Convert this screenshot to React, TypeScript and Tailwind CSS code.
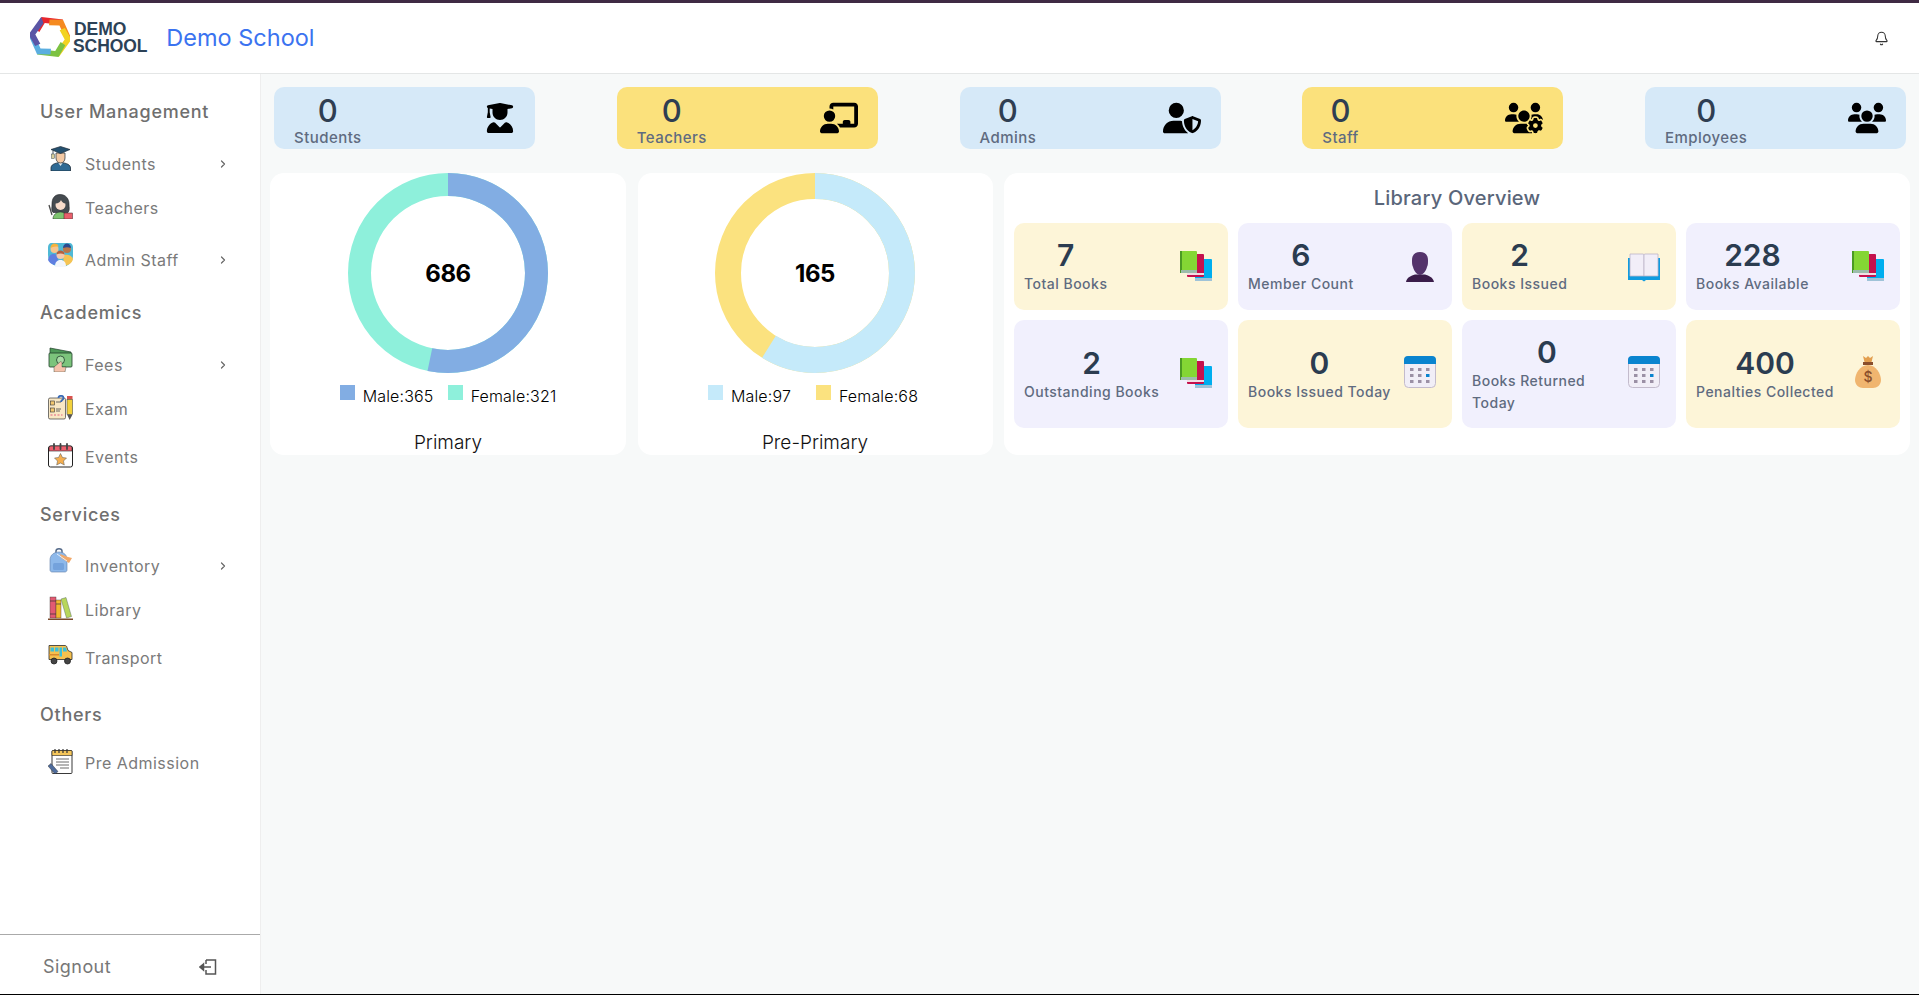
import { Bell, ChevronRight } from 'lucide-react'
import { FaChalkboardUser, FaUserGraduate, FaUserShield, FaUsers, FaUsersGear } from 'react-icons/fa6'
import type { ReactNode } from 'react'

// ---- small colour illustrations ----
const Pic = ({ children, className = 'mb-1' }: { children: ReactNode; className?: string }) => (
  <svg viewBox="0 0 25 25" className={`w-[25px] h-[25px] shrink-0 ${className}`}>{children}</svg>
)

const StudentPic = () => (
  <>
    <path d="M3 25v-3c0-3 3-5 9.500-5.500C19 17 22.500 19 22.500 22v3z" fill="#2f6a94" stroke="#1c2b38" strokeWidth="0.8" />
    <path d="M10 16.500l2.500 3.500 2.500-3.500z" fill="#e8eef2" />
    <path d="M8 7h9v5c0 3-2 5-4.500 5S8 15 8 12z" fill="#f3c9a4" stroke="#1c2b38" strokeWidth="0.7" />
    <path d="M3 3.500L12.500 .5l9.500 3-9.500 4z" fill="#24506f" stroke="#1c2b38" strokeWidth="0.7" />
    <path d="M5 4.500v5" stroke="#1c2b38" strokeWidth="0.8" />
    <rect x="3.500" y="8" width="3" height="4.500" fill="#d9cf9c" stroke="#1c2b38" strokeWidth="0.4" />
  </>
)
const TeacherPic = () => (
  <>
    <path d="M12 .5C6 .5 4 5 4 10c0 4-1 6 1 8.500h15c2-3 1-4.500 1-8.500 0-5-3-9.500-9-9.500z" fill="#454b50" stroke="#1c2024" strokeWidth="0.6" />
    <circle cx="12.500" cy="11" r="5" fill="#f8dccb" />
    <path d="M7.500 9.500c3 0 4.500-1.500 5.500-3.500 1 2 2.500 3.500 4.500 3.500-.5-3.500-2.500-5.500-5-5.500s-4.500 2-5 5.500z" fill="#454b50" />
    <path d="M5 25c0-4 3-7 7.500-7s6.500 3 6.500 7z" fill="#7ec46f" stroke="#1c2024" strokeWidth="0.5" />
    <rect x="16" y="19" width="8.500" height="6" fill="#e85f6b" stroke="#3d2024" strokeWidth="0.5" />
    <path d="M1 11l3 10" stroke="#4a4a4a" strokeWidth="1.300" />
  </>
)
const AdminPic = () => (
  <>
    <path d="M4 1h17c3 0 4 2 4 5v8c0 6-5 11-12 11S0 20 0 13V6c0-3 1-5 4-5z" fill="#4fb9d6" />
    <circle cx="6.500" cy="7" r="4" fill="#f7c58e" />
    <path d="M2.500 6c0-3 2-4.500 4-4.500s4 1 4 3c-3 0-6 0-8 1.500z" fill="#f6b23c" />
    <circle cx="19" cy="7" r="4" fill="#b9774b" />
    <path d="M15 6c0-3 2-4.500 4-4.500s4 1.500 4 4.500c-3-1-5-1-8 0z" fill="#2b4a8f" />
    <path d="M0 18c1-5 3-6 6-6s4 3 4 8l-4 3c-3-1-5-3-6-5z" fill="#5f7fe0" />
    <path d="M15 13c4-1 9 0 10 4-1 4-4 6-9 7z" fill="#f6c453" />
    <circle cx="12.500" cy="13" r="4" fill="#f6c9ad" />
    <path d="M8.500 12.500c0-3 2-4 4-4s4 1 4 4c-3-1.500-5-1.500-8 0z" fill="#b65f3c" />
    <path d="M7 25c0-5 2-7 5.500-7s5.500 2 5.500 7z" fill="#f3f6fb" />
  </>
)
const FeesPic = () => (
  <>
    <path d="M2 1l21 4v6H2z" fill="#4e9a58" stroke="#1f3d2a" strokeWidth="0.7" />
    <rect x="1" y="6" width="23" height="14" rx="1" fill="#7cc47c" stroke="#1f3d2a" strokeWidth="0.8" />
    <circle cx="12.500" cy="13" r="4" fill="#a9dca6" stroke="#1f3d2a" strokeWidth="0.8" />
    <path d="M6 25v-5l6-5c1-1 2 0 2 1v4h4l-1 5z" fill="#f6c3ac" stroke="#1f3d2a" strokeWidth="0.4" />
  </>
)
const ExamPic = () => (
  <>
    <rect x="0.500" y="3" width="17" height="21" rx="1.500" fill="#f8e7c4" stroke="#3a3a3a" strokeWidth="0.7" />
    <rect x="2.500" y="6" width="4" height="4" fill="#f2c76f" stroke="#333" strokeWidth="0.6" />
    <rect x="2.500" y="13" width="4" height="4" fill="#f2c76f" stroke="#333" strokeWidth="0.6" />
    <path d="M8 7h5M8 14h5M8 16h4" stroke="#555" strokeWidth="0.9" />
    <path d="M2.500 20h12" stroke="#e98f96" strokeWidth="1.500" strokeDasharray="2 1.500" />
    <path d="M10.500 3c0-3 5-3 5 0 0 2-2.500 2-2.500 4" fill="none" stroke="#3b6bb5" strokeWidth="1.800" />
    <rect x="19" y="1" width="5.500" height="3.500" fill="#d9534f" />
    <rect x="19" y="4.500" width="5.500" height="15" fill="#f2d13c" stroke="#333" strokeWidth="0.5" />
    <path d="M19 19.500h5.500L21.700 25z" fill="#555" />
  </>
)
const EventsPic = () => (
  <>
    <rect x="0.500" y="3" width="24" height="21" rx="2" fill="#fff" stroke="#222" strokeWidth="1" />
    <path d="M1 8V5a2 2 0 012-2h19a2 2 0 012 2v3z" fill="#ee5f6e" stroke="#222" strokeWidth="0.6" />
    <path d="M6 1v5M12.500 1v5M19 1v5" stroke="#444" strokeWidth="1.800" strokeLinecap="round" />
    <path d="M12.500 10.500l2 4 4 .5-3 3 .8 4-3.800-2-3.800 2 .8-4-3-3 4-.5z" fill="#f4ae4f" stroke="#555" strokeWidth="0.5" />
  </>
)
const InventoryPic = () => (
  <>
    <path d="M8 5V3c0-3 6-3 6 0v2" fill="none" stroke="#566b8a" strokeWidth="1.500" />
    <path d="M2 12c0-5 4-8 9-8s8 3 8 8v10c0 1-1 2-2 2H4c-1 0-2-1-2-2z" fill="#8db8ea" stroke="#5f7ea8" strokeWidth="0.6" />
    <rect x="5" y="15" width="11" height="7" rx="1.500" fill="#74a2dc" />
    <path d="M12 6l8 3 4 1-3 5-8-5z" fill="#f2a96a" />
    <path d="M9 6l10 7" stroke="#e6eef7" strokeWidth="1" />
  </>
)
const LibraryPic = () => (
  <>
    <rect x="2" y="1" width="6" height="21" fill="#e25a72" stroke="#433" strokeWidth="0.4" />
    <rect x="8" y="4" width="5" height="18" fill="#f1b72f" stroke="#433" strokeWidth="0.4" />
    <path d="M13 3l5-1.500 5.500 19-5 1.500z" fill="#b7d65b" stroke="#455" strokeWidth="0.4" />
    <path d="M2 5h6M2 18h6M8 8h5" stroke="#333" strokeWidth="0.7" />
    <rect x="0" y="22.500" width="25" height="1.500" fill="#7a4a2c" />
  </>
)
const TransportPic = () => (
  <>
    <path d="M1 1.500h16c1 0 2 1 2 2l1 3 4 2v7H1z" fill="#f6c14e" stroke="#2c2c2c" strokeWidth="0.8" />
    <rect x="2.500" y="3.500" width="3.500" height="4" fill="#3cc0d8" />
    <rect x="7" y="3.500" width="3.500" height="4" fill="#3cc0d8" />
    <rect x="11.500" y="3.500" width="2.500" height="9" fill="#3cc0d8" />
    <path d="M15 3.500h3l1 4h-4z" fill="#3cc0d8" />
    <rect x="1" y="10" width="10" height="1.500" fill="#d98a2e" />
    <circle cx="6" cy="17" r="3" fill="#444" stroke="#222" strokeWidth="0.8" />
    <circle cx="19.500" cy="17" r="3" fill="#444" stroke="#222" strokeWidth="0.8" />
  </>
)
const PreAdmissionPic = () => (
  <>
    <rect x="4" y="1.500" width="20" height="23" rx="1" fill="#fff" stroke="#222" strokeWidth="0.9" />
    <path d="M4 6.500V2.500a1 1 0 011-1h18a1 1 0 011 1v4z" fill="#f5c65a" stroke="#222" strokeWidth="0.6" />
    <path d="M7 0v4M11 0v4M15 0v4M19 0v4" stroke="#333" strokeWidth="1.200" />
    <path d="M8 10h13M8 13h13M8 16h13M12 19h9" stroke="#6b6b6b" strokeWidth="1" />
    <path d="M0 17l3-2.500 7 8-3 2.500z" fill="#4f6c9c" stroke="#222" strokeWidth="0.4" />
  </>
)

const Books = () => (
  <svg viewBox="0 0 32 32" className="w-8 h-8 shrink-0">
    <rect x="15" y="8" width="17" height="22" rx="1" fill="#00aeef" />
    <rect x="15" y="27" width="17" height="3" fill="#9fc3d8" />
    <rect x="7" y="3" width="17" height="23" rx="1" fill="#c5114d" />
    <rect x="7" y="22" width="17" height="2" fill="#f1dfe5" />
    <rect x="0" y="0" width="17" height="22" rx="1" fill="#84d634" />
    <rect x="0" y="0" width="2" height="22" fill="#4b9a23" />
    <rect x="1" y="19" width="16" height="3" fill="#9cbcab" />
  </svg>
)
const Member = () => (
  <svg viewBox="0 0 32 32" className="w-8 h-8 shrink-0">
    <path d="M2 31c1-5 5-6 9-7.500h10c4 1.500 8 2.500 9 7.500z" fill="#3b1d4a" />
    <path d="M8 9c0-5 3-8 8-8s8 3 8 8c0 3 0 5-1 7-1 4-4 8-7 8s-6-4-7-8c-1-2-1-4-1-7z" fill="#54336b" />
  </svg>
)
const OpenBook = () => (
  <svg viewBox="0 0 32 32" className="w-8 h-8 shrink-0 mt-1">
    <path d="M0 5h32v22H18l-2 1.500-2-1.500H0z" fill="#0f9be0" />
    <path d="M2 1h13c.7 0 1 .5 1 1v21H2z" fill="#f2eef8" stroke="#bdb4c8" strokeWidth="0.8" />
    <path d="M30 1H17c-.7 0-1 .5-1 1v21h14z" fill="#f2eef8" stroke="#bdb4c8" strokeWidth="0.8" />
  </svg>
)
const Calendar = () => (
  <svg viewBox="0 0 32 32" className="w-8 h-8 shrink-0 mb-1">
    <rect x="0.500" y="0.500" width="31" height="31" rx="4" fill="#f1eef7" stroke="#c3bbcc" />
    <path d="M0 8V4a4 4 0 014-4h24a4 4 0 014 4v4z" fill="#0a84cf" />
    <g fill="#9b90a5">
      <rect x="6" y="12" width="3.500" height="3" />
      <rect x="14" y="12" width="3.500" height="3" />
      <rect x="22" y="12" width="3.500" height="3" />
      <rect x="6" y="18" width="3.500" height="3" />
      <rect x="14" y="18" width="3.500" height="3" />
      <rect x="6" y="24" width="3.500" height="3" />
      <rect x="14" y="24" width="3.500" height="3" />
      <rect x="22" y="24" width="3.500" height="3" />
    </g>
    <rect x="22" y="18" width="3.500" height="3" fill="#0a84cf" />
  </svg>
)
const MoneyBag = () => (
  <svg viewBox="0 0 32 32" className="w-8 h-8 shrink-0 mb-1">
    <path d="M16 9C8 9 3 18 3 24c0 5 4 8 8 8h10c4 0 8-3 8-8 0-6-5-15-13-15z" fill="#f0b56f" />
    <path d="M11 0l3 2 2-2 2 2 3-2-1.500 6h-7z" fill="#e39f4f" />
    <rect x="11" y="6" width="10" height="3" fill="#8a4f2c" />
    <text x="16" y="26" textAnchor="middle" fontSize="14" fontFamily="Inter, sans-serif" fontWeight="500" fill="#8a4f2c">$</text>
  </svg>
)

// ---- data ----
const SIDEBAR = [
  { title: 'User Management', headClass: '', items: [
    { name: 'Students', pic: <StudentPic />, more: true, rowClass: 'mt-4' },
    { name: 'Teachers', pic: <TeacherPic />, more: false, rowClass: '' },
    { name: 'Admin Staff', pic: <AdminPic />, more: true, rowClass: 'mt-2' },
  ] },
  { title: 'Academics', headClass: 'mt-[17px]', items: [
    { name: 'Fees', pic: <FeesPic />, more: true, rowClass: 'mt-4' },
    { name: 'Exam', pic: <ExamPic />, more: false, rowClass: '' },
    { name: 'Events', pic: <EventsPic />, more: false, rowClass: 'mt-1' },
  ] },
  { title: 'Services', headClass: 'mt-[22px]', items: [
    { name: 'Inventory', pic: <InventoryPic />, more: true, rowClass: 'mt-[15px]' },
    { name: 'Library', pic: <LibraryPic />, more: false, rowClass: '' },
    { name: 'Transport', pic: <TransportPic />, more: false, rowClass: 'mt-1' },
  ] },
  { title: 'Others', headClass: 'mt-[21px]', items: [
    { name: 'Pre Admission', pic: <PreAdmissionPic />, more: false, rowClass: 'mt-3' },
  ] },
]

const STATS = [
  { label: 'Students', bg: 'bg-[#d6e9f8]', icon: <FaUserGraduate size={30} /> },
  { label: 'Teachers', bg: 'bg-[#fbe17c]', icon: <FaChalkboardUser size={38} /> },
  { label: 'Admins', bg: 'bg-[#d6e9f8]', icon: <FaUserShield size={38} /> },
  { label: 'Staff', bg: 'bg-[#fbe17c]', icon: <FaUsersGear size={38} /> },
  { label: 'Employees', bg: 'bg-[#d6e9f8]', icon: <FaUsers size={38} /> },
]

const LIBRARY = [
  { value: '7', label: 'Total Books', bg: 'bg-[#fdf5d8]', icon: <Books />, boxClass: 'mb-[2px]' },
  { value: '6', label: 'Member Count', bg: 'bg-[#f1f0fd]', icon: <Member />, boxClass: 'mb-[2px]' },
  { value: '2', label: 'Books Issued', bg: 'bg-[#fdf5d8]', icon: <OpenBook />, boxClass: 'mb-[2px]' },
  { value: '228', label: 'Books Available', bg: 'bg-[#f1f0fd]', icon: <Books />, boxClass: 'mb-[2px]' },
  { value: '2', label: 'Outstanding Books', bg: 'bg-[#f1f0fd]', icon: <Books />, boxClass: '' },
  { value: '0', label: 'Books Issued Today', bg: 'bg-[#fdf5d8]', icon: <Calendar />, boxClass: '' },
  { value: '0', label: 'Books Returned Today', bg: 'bg-[#f1f0fd]', icon: <Calendar />, boxClass: 'w-[150px]' },
  { value: '400', label: 'Penalties Collected', bg: 'bg-[#fdf5d8]', icon: <MoneyBag />, boxClass: '' },
]

const LOGO_BANDS = ['#e8262d', '#f58a20', '#f2d321', '#7cc242', '#5aaee0', '#5a55a5']

function Donut({ male, female, maleColor, femaleColor, thickness }: { male: number; female: number; maleColor: string; femaleColor: string; thickness: number }) {
  const total = male + female
  const r = 100 - thickness / 2
  const c = 2 * Math.PI * r
  return (
    <div className="relative w-[200px] h-[200px]">
      <svg viewBox="0 0 200 200" className="w-[200px] h-[200px] -rotate-90">
        <circle cx="100" cy="100" r={r} fill="none" stroke={femaleColor} strokeWidth={thickness} />
        <circle cx="100" cy="100" r={r} fill="none" stroke={maleColor} strokeWidth={thickness} strokeDasharray={`${(c * male) / total} ${c}`} />
      </svg>
      <div className="absolute inset-0 pt-[2px] flex items-center justify-center text-[24px] font-bold text-black tracking-[-0.02em]">{total}</div>
    </div>
  )
}

function ChartCard({ title, male, female, maleColor, femaleColor, maleSwatch, femaleSwatch, thickness, legendClass = '' }: { title: string; male: number; female: number; maleColor: string; femaleColor: string; maleSwatch: string; femaleSwatch: string; thickness: number; legendClass?: string }) {
  return (
    <div className="bg-white rounded-[14px] flex flex-col items-center">
      <Donut male={male} female={female} maleColor={maleColor} femaleColor={femaleColor} thickness={thickness} />
      <div className={`flex mt-3 text-[16px] leading-[21px] text-black font-light tracking-[0.01em] ${legendClass}`}>
        <div className="flex items-start w-[108px]">
          <span className={`w-[15px] h-[15px] mr-2 ${maleSwatch}`} />
          <span className="mt-px">Male:{male}</span>
        </div>
        <div className="flex items-start">
          <span className={`w-[15px] h-[15px] mr-2 ${femaleSwatch}`} />
          <span className="mt-px">Female:{female}</span>
        </div>
      </div>
      <div className="mt-6 text-[19px] leading-6 text-[#111] font-light">{title}</div>
    </div>
  )
}

export default function App() {
  return (
    <div className="w-[1919px] h-[995px] flex flex-col overflow-hidden bg-white border-t-[3px] border-t-[#3f2a44] border-b border-b-black [font-family:Inter,sans-serif]">
      {/* top bar */}
      <header className="h-[71px] shrink-0 flex items-center border-b border-[#e4e6e6] pl-[30px] pr-[30px]">
        <svg viewBox="2 2 36 36" className="w-10 h-10 -mt-[3px]">
          {LOGO_BANDS.map((color, i) => (
            <path key={color} d="M5.500 14L10.500 3H30L26.500 8H14L10 16.500z" fill={color} transform={`rotate(${i * 60 + 6} 20 20)`} />
          ))}
        </svg>
        <div className="ml-[3px] text-[#2c4257] text-[17.500px] leading-[17px] font-bold tracking-[-0.005em] [font-family:'Liberation_Sans',sans-serif]">
          <div className="ml-[1px]">DEMO</div>
          <div>SCHOOL</div>
        </div>
        <div className="ml-[19px] text-[23.500px] text-[#3b73f0]">Demo School</div>
        <Bell size={15} strokeWidth={1.7} className="ml-auto text-[#333]" />
      </header>

      <div className="flex-1 flex min-h-0">
        {/* sidebar */}
        <aside className="w-[261px] shrink-0 flex flex-col border-r border-[#eeeeee] bg-white">
          <nav className="flex-1 pt-6">
            {SIDEBAR.map((section) => (
              <div key={section.title} className={section.headClass}>
                <div className="pl-10 text-[18px] leading-7 font-medium text-[#6f6f6f] tracking-[0.04em]">{section.title}</div>
                {section.items.map((item) => (
                  <div key={item.name} className={`h-[44px] flex items-center pl-12 pr-[31px] text-[16px] text-[#7a7a7a] tracking-[0.03em] ${item.rowClass}`}>
                    <Pic className={item.more ? 'mb-3' : 'mb-1'}>{item.pic}</Pic>
                    <span className="ml-3">{item.name}</span>
                    {item.more && <ChevronRight size={12} strokeWidth={2.4} className="ml-auto text-[#666]" />}
                  </div>
                ))}
              </div>
            ))}
          </nav>
          <div className="h-[60px] shrink-0 flex items-center border-t border-[#aaaaaa] pt-1 pl-[43px] pr-[43px] text-[#777] text-[18px] tracking-[0.025em]">
            <span>Signout</span>
            <svg viewBox="0 0 18 16" className="w-[18px] h-4 ml-auto" fill="none" stroke="#555" strokeWidth="1.500">
              <path d="M7 1h9.500v14H7V11" />
              <path d="M7 5V1" />
              <path d="M12 8H2" />
              <path d="M4.500 5L1 8l3.500 3z" fill="#555" />
            </svg>
          </div>
        </aside>

        {/* main */}
        <main className="flex-1 bg-[#f7f9f9] pt-[13px]">
          <div className="flex justify-between ml-[13px] mr-[13px]">
            {STATS.map((s) => (
              <div key={s.label} className={`w-[261px] h-[62px] rounded-[10px] flex items-center justify-between pl-5 pr-5 ${s.bg}`}>
                <div className="text-center mt-[3px]">
                  <div className="text-[31px] leading-[36px] font-medium text-[#2f3e52]">0</div>
                  <div className="text-[15px] leading-[18px] font-medium text-[#5f6b80] tracking-[0.03em]">{s.label}</div>
                </div>
                <div className="text-black">{s.icon}</div>
              </div>
            ))}
          </div>

          <div className="grid grid-cols-[356px_355px_906px] gap-[11.500px] ml-[9px] mt-6 h-[282px]">
            <ChartCard title="Primary" male={365} female={321} maleColor="#82ade3" femaleColor="#8ef0db" maleSwatch="bg-[#82ade3]" femaleSwatch="bg-[#8ef0db]" thickness={23} />
            <ChartCard title="Pre-Primary" male={97} female={68} maleColor="#c5eafa" femaleColor="#fbe27f" maleSwatch="bg-[#c5eafa]" femaleSwatch="bg-[#fbe27f]" thickness={26} legendClass="pr-1" />

            <div className="bg-white rounded-[14px] px-[10px]">
              <h2 className="h-[50px] flex items-center justify-center text-[20px] font-medium text-[#5a667a] tracking-[0.01em]">Library Overview</h2>
              <div className="grid grid-cols-4 grid-rows-[87px_108px] gap-[10px]">
                {LIBRARY.map((t) => (
                  <div key={t.label} className={`rounded-[10px] pl-[10px] pr-4 flex items-center justify-between ${t.bg}`}>
                    <div className={t.boxClass}>
                      <div className="text-center text-[30px] leading-9 font-semibold text-[#2b3c50]">{t.value}</div>
                      <div className="text-[14px] leading-[22px] font-medium text-[#5f6b80] tracking-[0.035em]">{t.label}</div>
                    </div>
                    {t.icon}
                  </div>
                ))}
              </div>
            </div>
          </div>
        </main>
      </div>
    </div>
  )
}
